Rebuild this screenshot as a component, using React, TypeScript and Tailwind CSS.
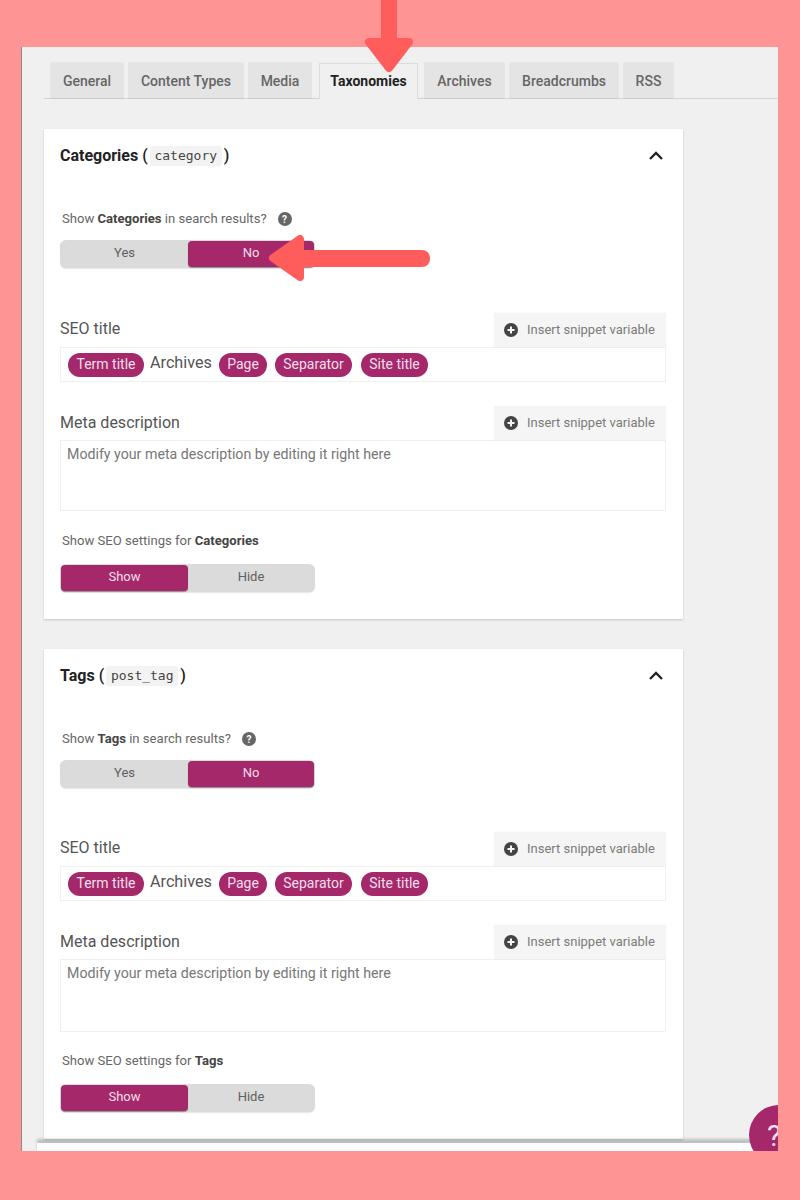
const tabs = [
  { label: "General", width: "w-[72px]" },
  { label: "Content Types", width: "w-[114px]" },
  { label: "Media", width: "w-[62px]" },
  { label: "Taxonomies", width: "w-[99px]", active: true },
  { label: "Archives", width: "w-[79px]" },
  { label: "Breadcrumbs", width: "w-[108px]" },
  { label: "RSS", width: "w-[49px]" },
];

function Toggle({ left, right, active }: { left: string; right: string; active: "left" | "right" }) {
  const on = "rounded-[4px] bg-[#a4286a] text-[#f5dfeb] shadow-[0_1px_1px_rgba(0,0,0,0.35)]";
  const off = "text-[#5f5f5f]";

  return (
    <div className="flex h-[28px] w-[255px] rounded-[6px] bg-[#dbdbdb] p-[1px] text-[13px] shadow-[0_1px_1px_rgba(0,0,0,0.1)]">
      <div className={`flex w-[127px] items-center justify-center pb-[2px] ${active === "left" ? on : off}`}>{left}</div>
      <div className={`flex w-[126px] items-center justify-center pb-[2px] ${active === "right" ? on : off}`}>{right}</div>
    </div>
  );
}

function SnippetButton() {
  return (
    <div className="flex h-[34px] w-[172px] items-center gap-[9px] rounded-t-[2px] bg-[#f5f5f5] pl-[10px] text-[13px] text-[#7b7b7b] shadow-[0_0_1px_rgba(0,0,0,0.15)]">
      <svg width="14" height="14" viewBox="0 0 14 14">
        <circle cx="7" cy="7" r="7" fill="#444" />
        <path d="M7 3.5v7M3.5 7h7" stroke="#f5f5f5" strokeWidth="2" />
      </svg>
      Insert snippet variable
    </div>
  );
}

function Pill({ label, className }: { label: string; className: string }) {
  return (
    <span className={`flex h-[24px] items-center justify-center rounded-full bg-[#a4286a] text-[14px] text-[#f5dfeb] ${className}`}>
      {label}
    </span>
  );
}

function Section({ name, slug, seoGap, metaBox }: { name: string; slug: string; seoGap: string; metaBox: string }) {
  return (
    <section className="ml-[22px] w-[639px] bg-white pr-[17px] pl-[16px] pb-[27px] shadow-[0_1px_2px_rgba(0,0,0,0.18)]">
      <div className="flex h-[52px] items-center justify-between text-[16px] text-[#222]">
        <h2 className="relative top-[1px] flex items-center font-bold">
          <span>{name}</span>
          <span className="ml-[4px] font-medium">(</span>
          <code className="mx-[2px] h-[20px] w-[72px] rounded-[3px] bg-[#f3f3f3] text-center font-['DejaVu_Sans_Mono',monospace] text-[13px] leading-[20px] font-normal text-[#444]">
            {slug}
          </code>
          <span className="font-medium">)</span>
        </h2>
        <svg className="mr-[3px]" width="14" height="9" viewBox="0 0 14 9" fill="none">
          <path d="M1 8l6-6 6 6" stroke="#222" strokeWidth="2.4" />
        </svg>
      </div>

      <div className="mt-[30px] ml-[2px] flex h-[16px] items-center text-[13.1px] text-[#666]">
        <span>
          Show <b className="font-bold text-[#444]">{name}</b> in search results?
        </span>
        <span className="ml-[11px] flex h-[14px] w-[14px] items-center justify-center rounded-full bg-[#666] text-[10px] font-bold text-white">
          ?
        </span>
      </div>
      <div className="mt-[13px]">
        <Toggle left="Yes" right="No" active="right" />
      </div>

      <div className={`flex items-start justify-between ${seoGap}`}>
        <label className="mt-[4px] text-[16px] text-[#555]">SEO title</label>
        <SnippetButton />
      </div>
      <div className="flex h-[35px] items-center border border-[#f0f0f0] pl-[7px]">
        <Pill label="Term title" className="w-[76px]" />
        <span className="relative -top-[1px] ml-[6px] w-[63px] text-[16.2px] text-[#555]">Archives</span>
        <Pill label="Page" className="ml-[6px] w-[48px]" />
        <Pill label="Separator" className="ml-[8px] w-[77px]" />
        <Pill label="Site title" className="ml-[9px] w-[67px]" />
      </div>

      <div className="mt-[24px] flex items-start justify-between">
        <label className="mt-[5px] text-[16px] text-[#555]">Meta description</label>
        <SnippetButton />
      </div>
      <div className={`border border-[#f0f0f0] pt-[3px] pl-[6px] text-[14.2px] text-[#777] ${metaBox}`}>
        Modify your meta description by editing it right here
      </div>

      <div className="ml-[2px] h-[16px] text-[13.1px] leading-[16px] text-[#666]">
        Show SEO settings for <b className="font-bold text-[#444]">{name}</b>
      </div>
      <div className="mt-[15px]">
        <Toggle left="Show" right="Hide" active="left" />
      </div>
    </section>
  );
}

export default function App() {
  return (
    <div className="relative h-[1200px] overflow-hidden bg-[#ff9494] pt-[47px] pr-[22px] pl-[21px] font-['Roboto',sans-serif]">
      <main className="relative h-[1104px] overflow-hidden border-l border-[#8a8a8a] bg-[#f0f0f0]">
        <nav className="ml-[22px] flex h-[52px] items-end gap-[6px] border-b border-[#d4d4d4] pl-[7px]">
          {tabs.map((tab) => (
            <div
              key={tab.label}
              className={
                tab.active
                  ? `relative top-[1px] mr-[1px] ml-[2px] flex h-[36px] items-center justify-center border border-b-0 border-[#dcdcdc] bg-[#f0f0f0] text-[14px] font-bold text-[#222] ${tab.width}`
                  : `flex h-[35px] items-center justify-center bg-[#e4e4e4] pt-[1px] text-[14px] font-medium text-[#666] shadow-[0_0_1px_rgba(0,0,0,0.25)] ${tab.width}`
              }
            >
              {tab.label}
            </div>
          ))}
        </nav>

        <div className="mt-[30px] flex flex-col gap-[30px]">
          <Section name="Categories" slug="category" seoGap="mt-[45px]" metaBox="mb-[22px] h-[71px]" />
          <Section name="Tags" slug="post_tag" seoGap="mt-[44px]" metaBox="mb-[21px] h-[73px]" />
        </div>

        {/* bottom bar and help button sit over the page */}
        <div className="absolute top-[1096px] left-[15px] h-[10px] w-[741px] bg-white shadow-[0_-4px_3px_rgba(0,0,0,0.2)]" />
        <div className="absolute top-[1058px] left-[727px] flex h-[60px] w-[60px] items-center rounded-full bg-[#a4286a] pl-[18px] text-[30px] text-[#f5dfeb]">
          ?
        </div>
      </main>

      {/* annotation arrows */}
      <svg className="absolute top-0 left-[360px]" width="58" height="76" viewBox="0 0 58 76">
        <rect x="21" y="0" width="16" height="45" fill="#ff5c5c" />
        <path d="M9 42h40L29 68z" fill="#ff5c5c" stroke="#ff5c5c" strokeWidth="8" strokeLinejoin="round" />
      </svg>
      <svg className="absolute top-[230px] left-[264px]" width="170" height="56" viewBox="0 0 170 56">
        <rect x="30" y="20" width="136" height="17" rx="8" fill="#ff5c5c" />
        <path d="M9 28L36 9v38z" fill="#ff5c5c" stroke="#ff5c5c" strokeWidth="8" strokeLinejoin="round" />
      </svg>
    </div>
  );
}
